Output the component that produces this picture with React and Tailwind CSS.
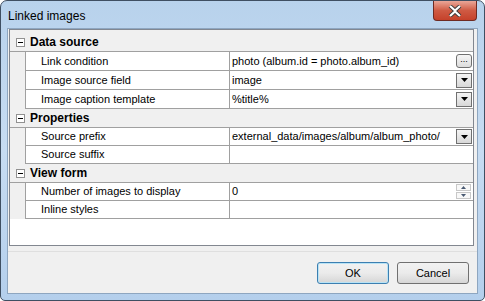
import React from 'react';

const font = { fontFamily: '"Liberation Sans", Arial, sans-serif' };

const sections = [
  {
    title: 'Data source',
    h: 'h-[22px] pt-[3px]',
    rows: [
      { name: 'Link condition', value: 'photo (album.id = photo.album_id)', ctl: 'dots', h: 'h-[19px]' },
      { name: 'Image source field', value: 'image', ctl: 'drop', h: 'h-[19px]' },
      { name: 'Image caption template', value: '%title%', ctl: 'drop', h: 'h-[19px]' },
    ],
  },
  {
    title: 'Properties',
    h: 'h-[19px]',
    rows: [
      { name: 'Source prefix', value: 'external_data/images/album/album_photo/', ctl: 'drop', h: 'h-[18px]' },
      { name: 'Source suffix', value: '', ctl: null, h: 'h-[18px]' },
    ],
  },
  {
    title: 'View form',
    h: 'h-[19px]',
    rows: [
      { name: 'Number of images to display', value: '0', ctl: 'spin', h: 'h-[18px]' },
      { name: 'Inline styles', value: '', ctl: null, h: 'h-[18px]' },
    ],
  },
];

const Minus = () => (
  <div className="w-[9px] h-[9px] border border-[#919191] bg-white flex items-center justify-center">
    <div className="w-[5px] h-[1px] bg-black" />
  </div>
);

const Control = ({ kind }) => {
  if (kind === 'dots') {
    return (
      <div className="w-[16px] h-[14px] mr-[1px] rounded-[3px] border border-[#707070] bg-gradient-to-b from-[#f6f6f6] to-[#dcdcdc] flex items-center justify-center text-[9px] leading-none pb-[3px]">
        ...
      </div>
    );
  }
  if (kind === 'drop') {
    return (
      <div className="w-[16px] h-[15px] mr-[1px] border border-[#707070] bg-gradient-to-b from-[#f4f4f4] to-[#d8d8d8] flex items-center justify-center">
        <svg width="7" height="4" viewBox="0 0 7 4"><path d="M0 0h7L3.5 4z" fill="#000" /></svg>
      </div>
    );
  }
  if (kind === 'spin') {
    return (
      <div className="w-[15px] mr-[2px] flex flex-col gap-[1px]">
        <div className="h-[7px] border border-[#c8c8c8] flex items-center justify-center bg-[#f8f8f8]">
          <svg width="5" height="3" viewBox="0 0 5 3"><path d="M0 3h5L2.5 0z" fill="#4a5a72" /></svg>
        </div>
        <div className="h-[7px] border border-[#c8c8c8] flex items-center justify-center bg-[#f8f8f8]">
          <svg width="5" height="3" viewBox="0 0 5 3"><path d="M0 0h5L2.5 3z" fill="#4a5a72" /></svg>
        </div>
      </div>
    );
  }
  return null;
};

const App = () => {
  return (
    <div className="w-[485px] h-[301px] overflow-hidden bg-white" style={font}>
      <div className="w-[485px] h-[301px] rounded-t-[7px] rounded-b-[5px] border border-[#3f4f62] bg-gradient-to-b from-[#b8d2ec] via-[#c7dcf2] to-[#b4cfec] flex flex-col">
        {/* title bar */}
        <div className="h-[27px] flex items-start justify-between">
          <div className="pl-[7px] pt-[6px] text-[12px] text-black">Linked images</div>
          <div className="mr-[7px] w-[44px] h-[20px] rounded-b-[4px] border border-t-0 border-[#6e2a22] bg-gradient-to-b from-[#e9a698] via-[#cf5a43] to-[#c5412a] flex items-center justify-center">
            <svg width="14" height="12" viewBox="0 0 14 12">
              <path d="M2 1l5 4.5L12 1M2 11l5-4.5L12 11" stroke="#3a3a3a" strokeWidth="4" fill="none" />
              <path d="M2 1l5 4.5L12 1M2 11l5-4.5L12 11" stroke="#fff" strokeWidth="2.2" fill="none" />
            </svg>
          </div>
        </div>
        {/* client area */}
        <div className="mx-[6px] mb-[6px] flex-1 border border-[#8ea6c0] bg-[#f0f0f0] flex flex-col">
          <div className="ml-[1px] mr-[3px] h-[217px] border border-[#828790] bg-white text-[11px] text-black">
            {sections.map((s) => (
              <div key={s.title}>
                <div className={`${s.h} flex items-center bg-[#f0f0f0] border-b border-[#a0a0a0]`}>
                  <div className="w-[15px] flex justify-end"><Minus /></div>
                  <div className="pl-[5px] font-bold text-[12px]">{s.title}</div>
                </div>
                {s.rows.map((r) => (
                  <div key={r.name} className={`${r.h} flex bg-[#f0f0f0]`}>
                    <div className="w-[15px]" />
                    <div className="flex-1 flex bg-white border-b border-l border-[#a0a0a0]">
                      <div className="w-[204px] pl-[15px] flex items-center border-r border-[#a0a0a0]">{r.name}</div>
                      <div className="flex-1 pl-[2px] flex items-center justify-between">
                        <span>{r.value}</span>
                        <Control kind={r.ctl} />
                      </div>
                    </div>
                  </div>
                ))}
              </div>
            ))}
          </div>
          <div className="mt-[5px] border-t border-[#dfdfdf] flex-1 flex items-start justify-end pt-[10px] pr-[8px] gap-[8px] text-[11px]">
            <div className="w-[72px] h-[22px] rounded-[3px] border border-[#3c7fb1] bg-gradient-to-b from-[#f2f2f2] via-[#ebebeb] to-[#d6d6d6] flex items-center justify-center shadow-[inset_0_0_0_1px_#b9e3f5]">OK</div>
            <div className="w-[72px] h-[22px] rounded-[3px] border border-[#707070] bg-gradient-to-b from-[#f2f2f2] via-[#ebebeb] to-[#d6d6d6] flex items-center justify-center">Cancel</div>
          </div>
        </div>
      </div>
    </div>
  );
};

export default App;
